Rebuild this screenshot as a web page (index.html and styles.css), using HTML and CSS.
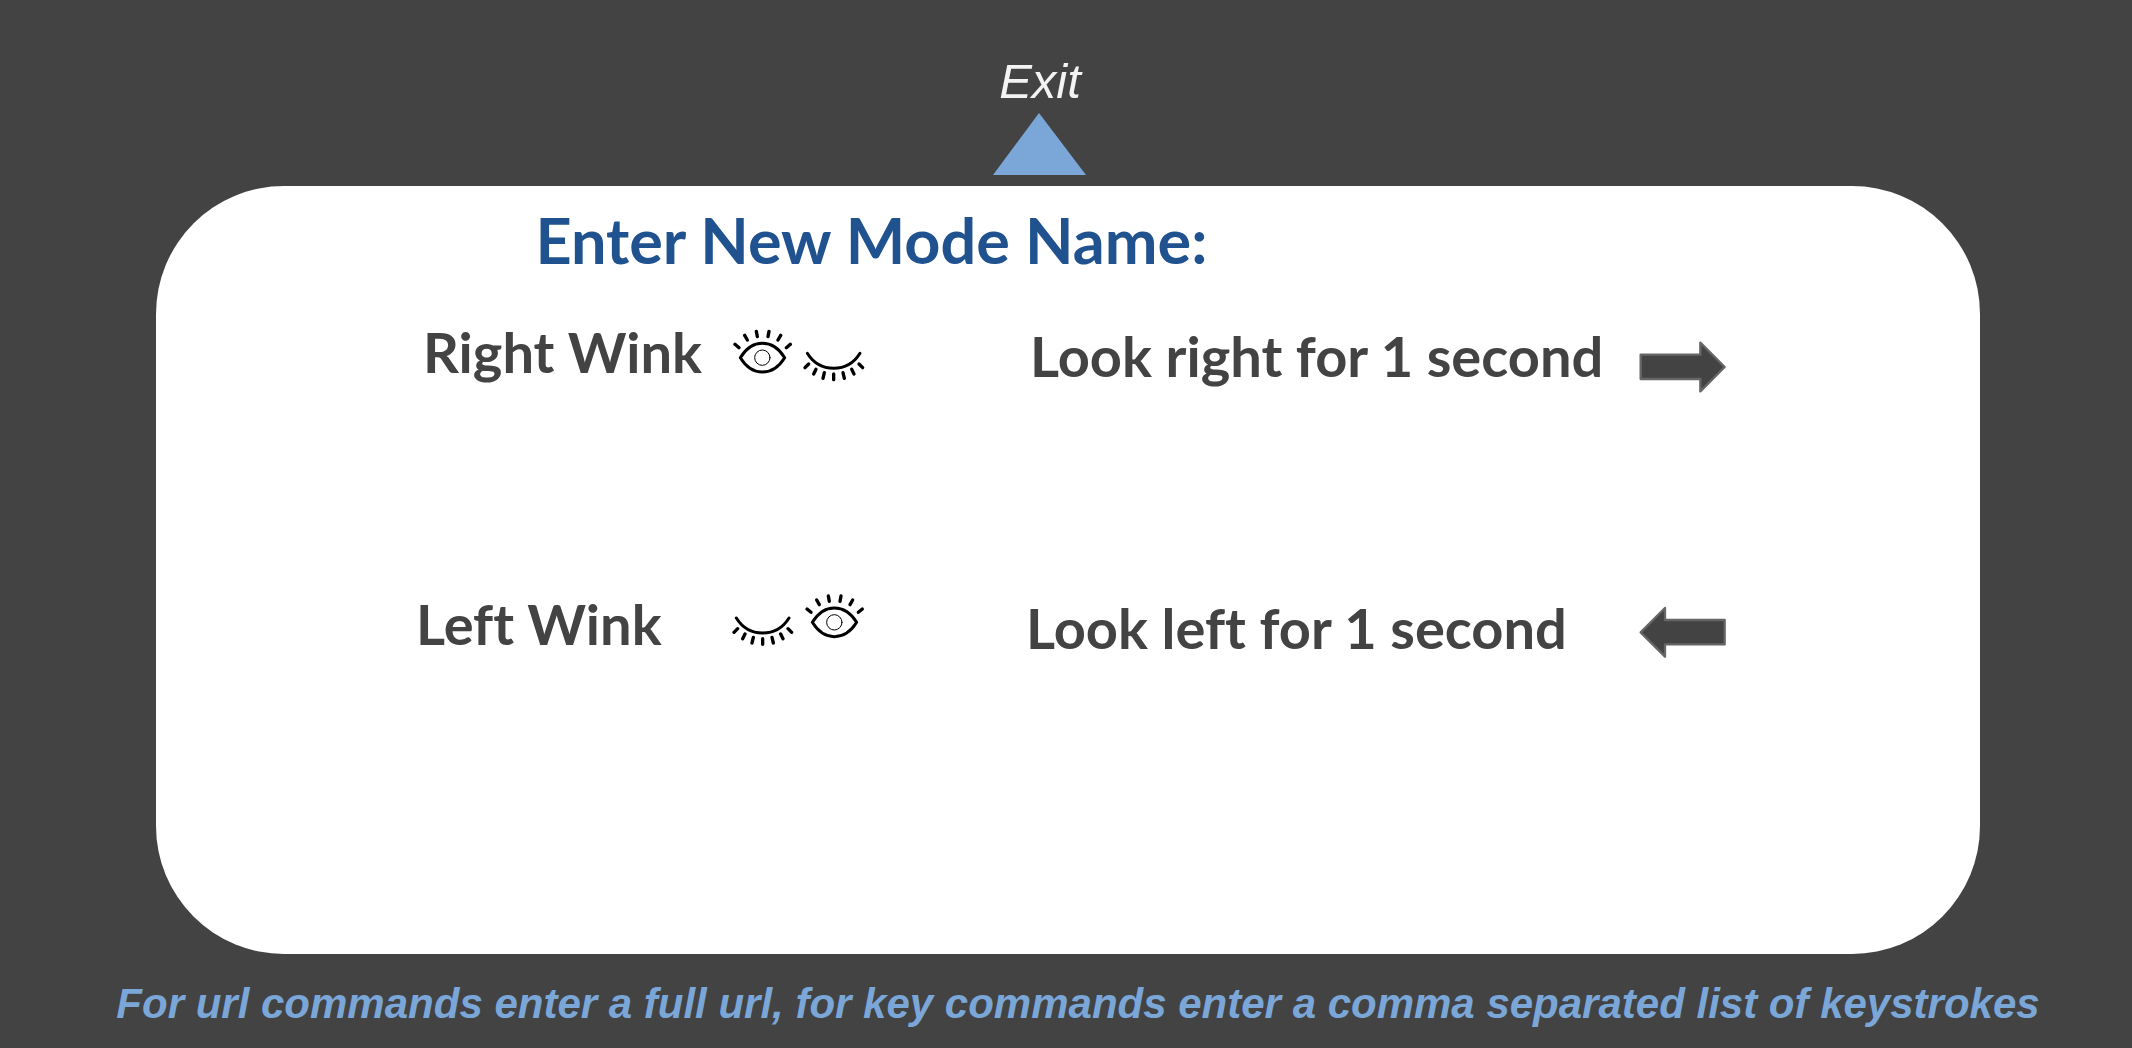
FILE: index.html
```html
<!DOCTYPE html>
<html lang="en">
<head>
<meta charset="utf-8">
<title>Enter New Mode Name</title>
<link rel="stylesheet" href="styles.css">
</head>
<body>
<header class="top">
  <a class="exit" href="#">
    <span>Exit</span>
    <svg class="exit-arrow" viewBox="0 0 94 62" aria-hidden="true"><path d="M46 0 93 62H0Z"/></svg>
  </a>
</header>
<main class="card">
  <h1 class="title">Enter New Mode Name:</h1>
  <section class="row row-right">
    <h2 class="wink">Right Wink</h2>
    <svg class="eyes" viewBox="36 -6 408 216" aria-hidden="true">
      <g id="open-eye">
        <path class="lid" d="M61 113C79 84 102 70 127 70S176 84 194 113C176 142 152 156 127 156S79 142 61 113Z"/>
        <circle class="iris" cx="127" cy="113" r="23"/>
        <path class="lash" d="M45 73 57 83M74 46 82 60M109 34 112 50M147 34 144 50M182 46 174 60M211 73 199 83"/>
      </g>
      <g id="closed-eye">
        <path class="brow" d="M262 100C280 129 309 145 341 145S402 129 420 100"/>
        <path class="lash" d="M266 132 255 143M288 148 281 162M313 158 309 175M341 162V179M369 158 373 175M395 148 402 162M417 132 428 143"/>
      </g>
    </svg>
    <p class="look">Look right for 1 second</p>
    <svg class="arrow" viewBox="54 -39 264 216" aria-hidden="true"><path d="M59 71H238V35L311 108 238 181V144H59Z"/></svg>
  </section>
  <section class="row row-left">
    <h2 class="wink">Left Wink</h2>
    <svg class="eyes" viewBox="36 27 408 216" aria-hidden="true">
      <use href="#closed-eye" x="-213" y="11"/>
      <use href="#open-eye" x="216" y="11"/>
    </svg>
    <p class="look">Look left for 1 second</p>
    <svg class="arrow" viewBox="54 -3 264 216" aria-hidden="true"><path d="M311 87H132V51L59 124 132 197V160H311Z"/></svg>
  </section>
</main>
<footer class="hint">For url commands enter a full url, for key commands enter a comma separated list of keystrokes</footer>
</body>
</html>
```
FILE: styles.css
```css
* { box-sizing: border-box; }

body {
  margin: 0;
  min-height: 100vh;
  display: flex;
  flex-direction: column;
  background: #434343;
  font-family: Lato, "Open Sans", sans-serif;
  font-variant-ligatures: none;
}

.top {
  display: flex;
  justify-content: center;
  padding: 53px 52px 11px 0;
}

.exit {
  display: flex;
  flex-direction: column;
  align-items: center;
  gap: 4px;
  color: #f3f3f3;
  font: italic 49px/56px "Liberation Sans", Arial, sans-serif;
  text-decoration: none;
}

.exit-arrow {
  width: 94px;
  height: 62px;
  fill: #7ba6d8;
}

.card {
  flex: 1;
  margin: 0 152px 0 156px;
  padding: 15px 0 40px;
  background: #fff;
  border-radius: 128px;
}

.title {
  margin: 0 0 40px;
  padding-left: 20.8%;
  color: #20528f;
  font-size: 63px;
  line-height: 77px;
}

.row {
  display: grid;
  height: 72px;
  color: #434343;
}

.row-right {
  grid-template-columns: 267fr 309fr 298fr 609fr 341fr;
  margin-bottom: 200px;
}

.row-left { grid-template-columns: 260fr 316fr 294fr 613fr 341fr; }

.wink,
.look {
  margin: 0;
  font-size: 56px;
  font-weight: 700;
  line-height: 68px;
  white-space: nowrap;
}

.wink { grid-column: 2; }

.look { padding-top: 4px; }

.eyes {
  width: 136px;
  height: 72px;
  overflow: visible;
  fill: none;
  stroke: #000;
  stroke-linecap: round;
  stroke-linejoin: round;
}

.lid, .brow { stroke-width: 9px; }
.lash { stroke-width: 10px; }
.iris { stroke-width: 3px; }

.arrow {
  width: 88px;
  height: 72px;
  overflow: visible;
  fill: #434343;
  stroke: #666;
  stroke-width: 7px;
  stroke-linejoin: round;
}

.hint {
  padding: 25px 0 19px 24px;
  color: #7ba6d8;
  font: italic bold 42px/50px "Liberation Sans", Arial, sans-serif;
  text-align: center;
}
```
